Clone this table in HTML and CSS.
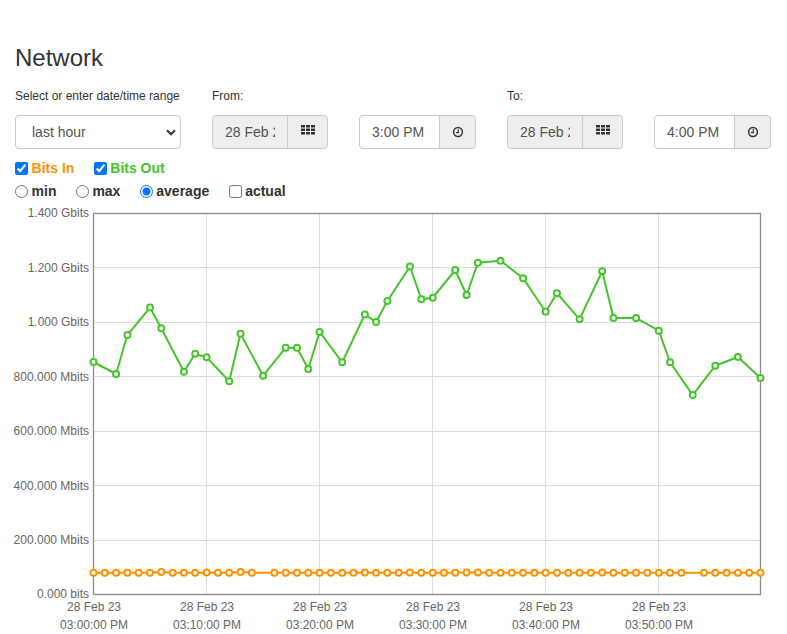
FILE: index.html
```html
<!DOCTYPE html>
<html>
<head>
<meta charset="utf-8">
<link rel="stylesheet" href="styles.css">
</head>
<body>
<div class="page">
  <h3 class="title">Network</h3>
  <div class="controls">
    <div class="group range">
      <label class="lbl">Select or enter date/time range</label>
      <div class="select">
        <span>last hour</span>
        <svg class="chev" width="10" height="7" viewBox="0 0 10 7"><path d="M1 1.3 L5 5.3 L9 1.3" fill="none" stroke="#333" stroke-width="2"/></svg>
      </div>
    </div>
    <div class="group">
      <label class="lbl">From:</label>
      <div class="pair">
        <div class="igroup date">
          <div class="field ro"><span class="val">28 Feb 23</span></div>
          <div class="addon"><svg class="grid-ic" width="14" height="10" viewBox="0 0 14 10"><g fill="#333"><rect x="0" y="0" width="4" height="2.5"/><rect x="5" y="0" width="4" height="2.5"/><rect x="10" y="0" width="4" height="2.5"/><rect x="0" y="3.5" width="4" height="2.5"/><rect x="5" y="3.5" width="4" height="2.5"/><rect x="10" y="3.5" width="4" height="2.5"/><rect x="0" y="7" width="4" height="2.5"/><rect x="5" y="7" width="4" height="2.5"/><rect x="10" y="7" width="4" height="2.5"/></g></svg></div>
        </div>
        <div class="igroup time">
          <div class="field"><span class="val">3:00 PM</span></div>
          <div class="addon"><svg class="clock-ic" width="12" height="12" viewBox="0 0 12 12"><circle cx="6" cy="6" r="4.4" fill="none" stroke="#333" stroke-width="1.5"/><path d="M6.3 3.2 V6.6 H3.9" fill="none" stroke="#333" stroke-width="1.2"/></svg></div>
        </div>
      </div>
    </div>
    <div class="group">
      <label class="lbl">To:</label>
      <div class="pair">
        <div class="igroup date">
          <div class="field ro"><span class="val">28 Feb 23</span></div>
          <div class="addon"><svg class="grid-ic" width="14" height="10" viewBox="0 0 14 10"><g fill="#333"><rect x="0" y="0" width="4" height="2.5"/><rect x="5" y="0" width="4" height="2.5"/><rect x="10" y="0" width="4" height="2.5"/><rect x="0" y="3.5" width="4" height="2.5"/><rect x="5" y="3.5" width="4" height="2.5"/><rect x="10" y="3.5" width="4" height="2.5"/><rect x="0" y="7" width="4" height="2.5"/><rect x="5" y="7" width="4" height="2.5"/><rect x="10" y="7" width="4" height="2.5"/></g></svg></div>
        </div>
        <div class="igroup time">
          <div class="field"><span class="val">4:00 PM</span></div>
          <div class="addon"><svg class="clock-ic" width="12" height="12" viewBox="0 0 12 12"><circle cx="6" cy="6" r="4.4" fill="none" stroke="#333" stroke-width="1.5"/><path d="M6.3 3.2 V6.6 H3.9" fill="none" stroke="#333" stroke-width="1.2"/></svg></div>
        </div>
      </div>
    </div>
  </div>

  <div class="opts row1">
    <label class="opt"><input type="checkbox" checked><span class="in">Bits In</span></label>
    <label class="opt"><input type="checkbox" checked><span class="out">Bits Out</span></label>
  </div>
  <div class="opts row2">
    <label class="opt"><input type="radio" name="agg"><span>min</span></label>
    <label class="opt"><input type="radio" name="agg"><span>max</span></label>
    <label class="opt"><input type="radio" name="agg" checked><span>average</span></label>
    <label class="opt"><input type="checkbox"><span>actual</span></label>
  </div>
</div>

<svg class="chart" width="787" height="430" viewBox="0 204 787 430">
  <defs>
    <marker id="mo" markerUnits="userSpaceOnUse" markerWidth="10" markerHeight="10" viewBox="-5 -5 10 10" refX="0" refY="0">
      <circle r="3" fill="#fff" stroke="#ff9200" stroke-width="2"/>
    </marker>
    <marker id="mg" markerUnits="userSpaceOnUse" markerWidth="10" markerHeight="10" viewBox="-5 -5 10 10" refX="0" refY="0">
      <circle r="3" fill="#fff" stroke="#45c42c" stroke-width="2"/>
    </marker>
  </defs>
  <g class="grid">
    <line x1="93.5" y1="267.5" x2="760.5" y2="267.5"/>
    <line x1="93.5" y1="322.5" x2="760.5" y2="322.5"/>
    <line x1="93.5" y1="376.5" x2="760.5" y2="376.5"/>
    <line x1="93.5" y1="431.5" x2="760.5" y2="431.5"/>
    <line x1="93.5" y1="485.5" x2="760.5" y2="485.5"/>
    <line x1="93.5" y1="540.5" x2="760.5" y2="540.5"/>
    <line x1="206.5" y1="213.5" x2="206.5" y2="594.5"/>
    <line x1="319.5" y1="213.5" x2="319.5" y2="594.5"/>
    <line x1="432.5" y1="213.5" x2="432.5" y2="594.5"/>
    <line x1="545.5" y1="213.5" x2="545.5" y2="594.5"/>
    <line x1="658.5" y1="213.5" x2="658.5" y2="594.5"/>
  </g>
  <rect class="frame" x="93.5" y="213.5" width="667" height="381"/>
  <g class="ylab">
    <text x="89" y="217.3">1.400 Gbits</text>
    <text x="89" y="271.8">1.200 Gbits</text>
    <text x="89" y="326.3">1.000 Gbits</text>
    <text x="89" y="380.8">800.000 Mbits</text>
    <text x="89" y="435.3">600.000 Mbits</text>
    <text x="89" y="489.8">400.000 Mbits</text>
    <text x="89" y="544.3">200.000 Mbits</text>
    <text x="89" y="597.5">0.000 bits</text>
  </g>
  <g class="xlab">
    <text x="94" y="611">28 Feb 23</text><text x="94" y="628.6">03:00:00 PM</text>
    <text x="207" y="611">28 Feb 23</text><text x="207" y="628.6">03:10:00 PM</text>
    <text x="320" y="611">28 Feb 23</text><text x="320" y="628.6">03:20:00 PM</text>
    <text x="433" y="611">28 Feb 23</text><text x="433" y="628.6">03:30:00 PM</text>
    <text x="546" y="611">28 Feb 23</text><text x="546" y="628.6">03:40:00 PM</text>
    <text x="659" y="611">28 Feb 23</text><text x="659" y="628.6">03:50:00 PM</text>
  </g>
  <polyline class="s-in" marker-start="url(#mo)" marker-mid="url(#mo)" marker-end="url(#mo)"
    points="93.5,572.7 104.8,572.7 116.1,572.7 127.4,572.7 138.7,572.7 150,572.7 161.3,572 172.6,572.7 183.9,572.7 195.2,572.7 206.6,572.5 217.9,572.7 229.2,572.7 240.5,572 251.8,572.7 274.4,572.7 285.7,572.7 297,572.7 308.3,572.7 319.6,572.7 330.9,572.7 342.2,572.7 353.5,572.7 364.8,572.5 376.1,572.7 387.4,572.7 398.7,572.7 410,572.5 421.3,572.7 432.7,572.7 444,572.7 455.3,572.7 466.6,572.5 477.9,572.5 489.2,572.7 500.5,572.7 511.8,572.7 523.1,572.7 534.4,572.7 545.7,572.7 557,572.7 568.3,572.7 579.6,572.7 590.9,572.7 602.2,572.5 613.5,572.7 624.8,572.7 636.1,572.7 647.4,572.7 658.8,572.7 670.1,572.7 681.4,572.7 704,572.7 715.3,572.7 726.6,572.7 737.9,572.7 749.2,572.7 760.5,572.7"/>
  <polyline class="s-out" marker-start="url(#mg)" marker-mid="url(#mg)" marker-end="url(#mg)"
    points="93.5,362 116.1,374 127.4,335 150,307.5 161.3,328.3 183.9,371.7 195.2,353.7 206.6,357.3 229.2,381.3 240.5,333.7 263.1,375.7 285.7,347.7 297,347.7 308.3,369 319.6,332 342.2,362.3 364.8,314.5 376.1,322 387.4,301 410,266.5 421.3,299.3 432.7,297.7 455.3,270 466.6,295 477.9,262.7 500.5,260.7 523.1,278.3 545.7,311.7 557,293.3 579.6,319.3 602.2,271.3 613.5,318 636.1,318 658.8,330.7 670.1,362.3 692.7,395 715.3,365.7 737.9,357 760.5,378"/>
</svg>
</body>
</html>
```

FILE: styles.css
```css
html, body {
  margin: 0;
  padding: 0;
  background: #fff;
}
body {
  font-family: "Liberation Sans", Arial, sans-serif;
  font-size: 14px;
  color: #333;
}
.page {
  padding: 45px 15px 0;
}
.title {
  margin: 0;
  font-size: 24px;
  line-height: 26px;
  font-weight: normal;
  color: #333;
}
.controls {
  display: flex;
  gap: 31px;
  margin-top: 17px;
}
.lbl {
  display: block;
  font-size: 12px;
  line-height: 17px;
  margin-bottom: 10px;
  color: #333;
}
.select {
  box-sizing: border-box;
  width: 166px;
  height: 34px;
  border: 1px solid #ccc;
  border-radius: 4px;
  background: #fff;
  display: flex;
  align-items: center;
  justify-content: space-between;
  padding: 0 4px 0 16px;
  color: #555;
  font-size: 14px;
}
.chev {
  display: block;
}
.pair {
  display: flex;
  gap: 31px;
}
.igroup {
  display: flex;
  height: 34px;
}
.field {
  box-sizing: border-box;
  height: 34px;
  border: 1px solid #ccc;
  border-radius: 4px 0 0 4px;
  background: #fff;
  padding: 0 12px;
  display: flex;
  align-items: center;
  color: #555;
  font-size: 14px;
}
.field.ro {
  background: #eee;
}
.val {
  display: block;
  overflow: hidden;
  white-space: nowrap;
  flex: 1;
}
.addon {
  box-sizing: border-box;
  height: 34px;
  margin-left: -1px;
  border: 1px solid #ccc;
  border-radius: 0 4px 4px 0;
  background: #eee;
  display: flex;
  align-items: center;
  justify-content: center;
}
.date .field { width: 76px; }
.date .addon { width: 41px; }
.time .field { width: 81px; }
.time .addon { width: 37px; }
.grid-ic {
  display: block;
  margin-bottom: 4px;
}
.clock-ic {
  display: block;
  margin-bottom: 1px;
}
.opts {
  display: flex;
  height: 20px;
  align-items: center;
}
.row1 { margin-top: 9px; }
.row2 { margin-top: 3px; }
.opt {
  display: flex;
  align-items: center;
  font-weight: bold;
  font-size: 14px;
  line-height: 20px;
  margin-right: 19.3px;
}
.opt input {
  margin: 0 3.6px 0 0;
  width: 13px;
  height: 13px;
}
.in { color: #ff9200; }
.out { color: #45c42c; }
.chart {
  display: block;
  margin-top: 3px;
}
.grid line {
  stroke: #dcdcdc;
  stroke-width: 1;
}
.frame {
  fill: none;
  stroke: #8a8a8a;
  stroke-width: 1.3;
}
.ylab text, .xlab text {
  font-family: "Liberation Sans", Arial, sans-serif;
  font-size: 12px;
  fill: #666;
}
.ylab text { text-anchor: end; }
.xlab text { text-anchor: middle; }
.s-in {
  fill: none;
  stroke: #ff9200;
  stroke-width: 2;
}
.s-out {
  fill: none;
  stroke: #45c42c;
  stroke-width: 2;
}
```
